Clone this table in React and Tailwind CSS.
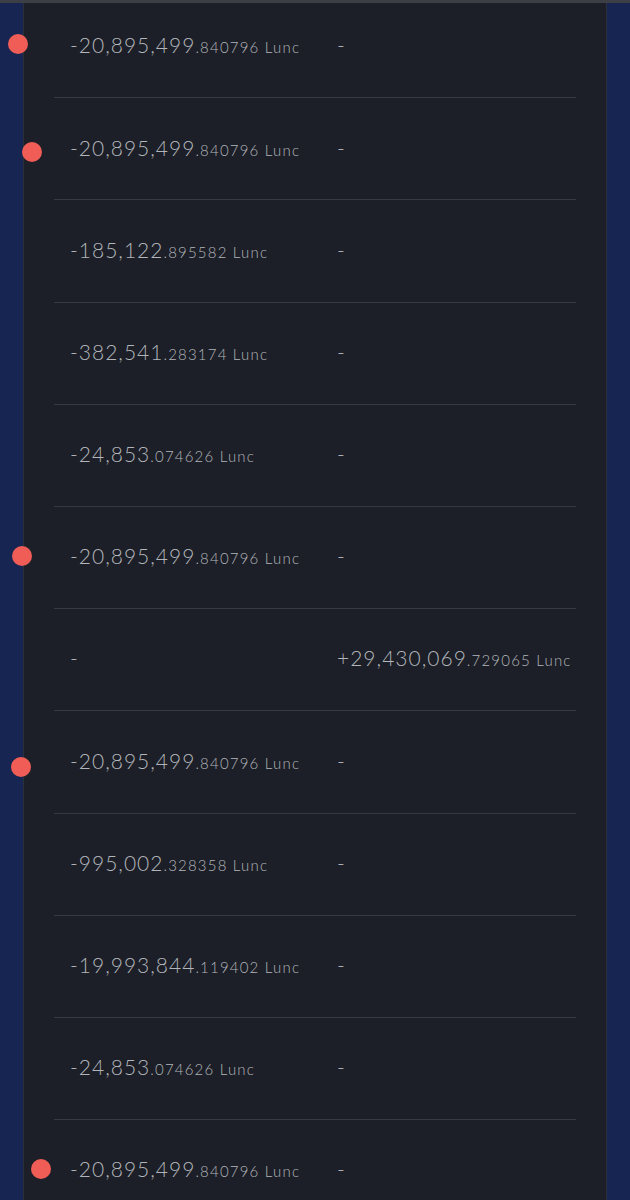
import React from 'react';

const rows = [
  { out: ['-20,895,499', '.840796'], dot: { x: 18, y: 44 } },
  { out: ['-20,895,499', '.840796'], dot: { x: 32, y: 152 } },
  { out: ['-185,122', '.895582'] },
  { out: ['-382,541', '.283174'] },
  { out: ['-24,853', '.074626'] },
  { out: ['-20,895,499', '.840796'], dot: { x: 22, y: 556 } },
  { in: ['+29,430,069', '.729065'] },
  { out: ['-20,895,499', '.840796'], dot: { x: 21, y: 767 } },
  { out: ['-995,002', '.328358'] },
  { out: ['-19,993,844', '.119402'] },
  { out: ['-24,853', '.074626'] },
  { out: ['-20,895,499', '.840796'], dot: { x: 41, y: 1169 } },
];

const Amount = ({ value }) => {
  if (!value) return <span className="text-[21px] tracking-[1px]">-</span>;
  return (
    <span className="whitespace-nowrap">
      <span className="text-[21px] tracking-[1px]">{value[0]}</span>
      <span className="text-[15px] tracking-[1.2px]">{value[1]} Lunc</span>
    </span>
  );
};

export default function App() {
  return (
    <div className="relative w-[630px] h-[1200px] overflow-hidden bg-[#162551] font-['Lato','Liberation_Sans',sans-serif] font-light text-[#b2b5ba]">
      <div className="h-[3px] bg-[#3c3f46]" />
      <div className="flex h-[1197px]">
        <div className="w-[23px] shrink-0" />
        <div className="w-[584px] shrink-0 bg-[#1c1f27] border-l border-r border-[#2c3038] overflow-hidden">
          <div className="-mt-[7px]">
            {rows.map((r, i) => (
              <div key={i} className="mx-[30px] h-[102.2px] border-b border-[#353941] flex items-center pl-[16px] pb-[3px]">
                <div className="w-[267px] shrink-0">
                  <Amount value={r.out} />
                </div>
                <div>
                  <Amount value={r.in} />
                </div>
              </div>
            ))}
          </div>
        </div>
        <div className="flex-1" />
      </div>

      {/* red markers */}
      {rows.filter(r => r.dot).map((r, i) => (
        <div
          key={i}
          className="absolute w-[20px] h-[20px] rounded-full bg-[#ef5d56]"
          style={{ left: r.dot.x - 10, top: r.dot.y - 10 }}
        />
      ))}
    </div>
  );
}
